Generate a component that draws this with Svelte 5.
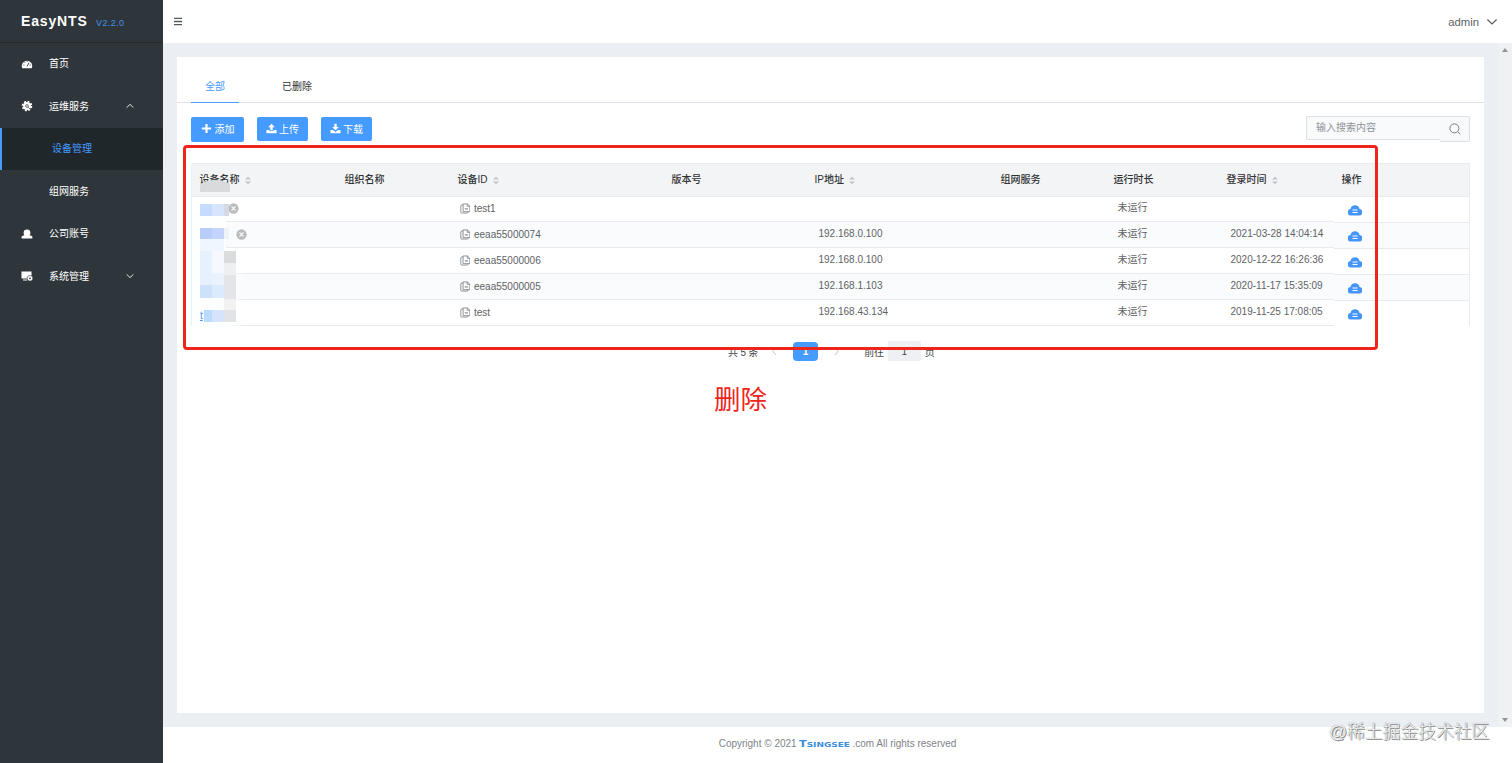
<script>
	let keyword = "";
	let page = "1";

	const columns = [
		{ label: "设备名称", sortable: true },
		{ label: "组织名称" },
		{ label: "设备ID", sortable: true },
		{ label: "版本号" },
		{ label: "IP地址", sortable: true },
		{ label: "组网服务" },
		{ label: "运行时长" },
		{ label: "登录时间", sortable: true },
		{ label: "操作" },
	];

	const devices = [
		{ id: "test1", ip: "", status: "未运行", time: "" },
		{ id: "eeaa55000074", ip: "192.168.0.100", status: "未运行", time: "2021-03-28 14:04:14" },
		{ id: "eeaa55000006", ip: "192.168.0.100", status: "未运行", time: "2020-12-22 16:26:36" },
		{ id: "eeaa55000005", ip: "192.168.1.103", status: "未运行", time: "2020-11-17 15:35:09" },
		{ id: "test", ip: "192.168.43.134", status: "未运行", time: "2019-11-25 17:08:05" },
	];

	// tiles that cover the device names: x, y, width, height, colour
	const tiles = [
		[0, 26, 12, 12, "#c5dcff"],
		[12, 26, 12, 12, "#d6e5fc"],
		[24, 26, 5, 12, "#d5d9e1"],
		[0, 50, 12, 11, "#b9cdfb"],
		[12, 50, 12, 11, "#c5d4fc"],
		[24, 50, 5, 11, "#edf3f6"],
		[0, 61, 24, 13, "#f0f6ff"],
		[0, 73, 12, 34, "#e7f0fd"],
		[12, 73, 12, 22, "#f5f9ff"],
		[12, 95, 12, 12, "#eaf2fe"],
		[24, 73, 12, 12, "#dbdcdd"],
		[24, 85, 12, 12, "#eeeff0"],
		[24, 97, 12, 24, "#e3e5e9"],
		[0, 107, 12, 13, "#cde1fb"],
		[12, 107, 12, 13, "#dbeafd"],
		[24, 121, 12, 12, "#f2f2f3"],
		[4, 132, 8, 12, "#bcdcff"],
		[12, 132, 12, 12, "#d5e4f8"],
		[24, 132, 12, 12, "#e1e3e6"],
	];
</script>

<div class="app">
	<aside class="sidebar">
		<div class="brand"><b>EasyNTS</b><span>V2.2.0</span></div>
		<nav>
			<a class="item" href="#home">
				<svg class="menu-icon" viewBox="0 0 12 12"><path fill="#fff" d="M1.3 10.2A5.2 5.2 0 1 1 10.7 10.2Z" /><path stroke="#2f353b" stroke-width=".9" fill="none" d="M6 8.4 8 4.8M2.4 7h1M3.7 4.4l.5.6M8.8 7h1M6 3.1v.8" /></svg>
				<span>首页</span>
			</a>
			<a class="item" href="#ops">
				<svg class="menu-icon" viewBox="0 0 12 12"><circle cx="6" cy="6" r="4" fill="#fff" /><circle cx="6" cy="6" r="4.4" fill="none" stroke="#fff" stroke-width="1.8" stroke-dasharray="1.9 1.55" /><circle cx="6" cy="6" r="1.4" fill="none" stroke="#2f353b" stroke-width=".7" /><path d="m7.4 7.4 2 2" stroke="#2f353b" stroke-width=".8" /></svg>
				<span>运维服务</span>
				<svg class="caret" viewBox="0 0 8 8"><path d="M.7 5.6 4 2.4 7.3 5.6" /></svg>
			</a>
			<a class="item sub active" href="#devices"><span>设备管理</span></a>
			<a class="item sub" href="#network"><span>组网服务</span></a>
			<a class="item" href="#account">
				<svg class="menu-icon" viewBox="0 0 12 12"><path fill="#fff" d="M2.600 5a3.400 3.400 0 0 1 6.800 0c0 1-.3 1.700-.8 2.200 1.600.3 2.900.9 2.900 2.200 0 .7-.3 1-1 1h-9c-.7 0-1-.3-1-1C.5 8.100 1.800 7.500 3.400 7.200 2.900 6.700 2.600 6 2.600 5Z" /></svg>
				<span>公司账号</span>
			</a>
			<a class="item" href="#system">
				<svg class="menu-icon" viewBox="0 0 12 12"><path fill="#fff" d="M.5 1.500h10V8.600H.5ZM2 9.500h4v1H2Z" /><circle cx="9" cy="8.300" r="2.800" fill="#fff" stroke="#2f353b" stroke-width=".6" /><circle cx="9" cy="8.300" r=".9" fill="#2f353b" /></svg>
				<span>系统管理</span>
				<svg class="caret" viewBox="0 0 8 8"><path d="M.7 2.400 4 5.600 7.300 2.400" /></svg>
			</a>
		</nav>
	</aside>

	<div class="body">
		<header class="topbar">
			<svg class="burger" viewBox="0 0 10 10"><path d="M.5 1.500h9M.5 5h9M.5 8.500h9" /></svg>
			<div class="user">admin <svg viewBox="0 0 12 12"><path d="M1.400 3.500 6 8l4.600-4.500" /></svg></div>
		</header>

		<div class="scroller">
			<main class="panel">
				<div class="tabs">
					<button class="tab selected">全部</button>
					<button class="tab">已删除</button>
				</div>

				<div class="toolbar">
					<button class="btn add"><svg viewBox="0 0 12 12"><path d="M4.800 1h2.400v3.800H11v2.400H7.200V11H4.800V7.200H1V4.800h3.800Z" /></svg>添加</button>
					<button class="btn"><svg viewBox="0 0 12 12"><path d="M6 .7 9.600 4.500H7.300V8H4.700V4.500H2.400ZM.5 7.600h3.300v1.200h4.400V7.600h3.300v3.500H.5Z" /></svg>上传</button>
					<button class="btn"><svg viewBox="0 0 12 12"><path d="M4.700.7h2.600v3.600h2.300L6 8.100 2.400 4.300h2.300ZM.5 7.600h2.700L6 9.800l2.800-2.200h2.700v3.500H.5Z" /></svg>下载</button>
					<div class="search">
						<input bind:value={keyword} placeholder="输入搜索内容" />
						<button aria-label="搜索"><svg viewBox="0 0 12 12"><circle cx="5.400" cy="5.400" r="4.500" /><path d="m8.700 8.700 2.500 2.600" /></svg></button>
					</div>
				</div>

				<div class="table-wrap">
					<div class="table">
						<div class="row head">
							{#each columns as column}
								<div class="cell">
									{column.label}
									{#if column.sortable}
										<svg class="sort" viewBox="0 0 8 10"><path d="M4 .7 7.400 4H.6ZM4 9.300.6 6h6.800Z" /></svg>
									{/if}
								</div>
							{/each}
							<div class="cell"></div>
						</div>
						{#each devices as device, i}
							<div class="row" class:striped={i % 2 === 1}>
								<div class="cell">
									{#if i < 2}
										<svg class="off" class:far={i === 1} viewBox="0 0 12 12"><circle cx="6" cy="6" r="5.600" fill="#b9bbbd" /><path d="m3.800 3.800 4.400 4.400m0-4.400L3.800 8.200" stroke="#fff" stroke-width="1.200" /></svg>
									{/if}
								</div>
								<div class="cell"></div>
								<div class="cell device">
									<svg viewBox="0 0 12 12"><path d="M3.500.8h5l2.700 2.600v6.200H3.500ZM3.500 2H1.800Q.9 2 .9 3v7.300q0 .9.900.9h6.400q1 0 1-.9v-.9M8.300.8v2.700h2.900" /><path d="M5.500 5.400h3.500v2H5.500Z" fill="#aaadb1" stroke="none" /></svg>
									{device.id}
								</div>
								<div class="cell"></div>
								<div class="cell value">{device.ip}</div>
								<div class="cell"></div>
								<div class="cell value status">{device.status}</div>
								<div class="cell value">{device.time}</div>
								<div class="cell fixed">
									<svg viewBox="0 0 14 12"><path fill="#4595fb" d="M3.300 11.500A3.200 3.200 0 0 1 2.500 5 4.600 4.600 0 0 1 11.500 5 3.200 3.200 0 0 1 10.700 11.500Z" /><path stroke="#fff" stroke-width="1.100" d="M4.500 6h5M4.500 8.500h5" /></svg>
								</div>
								<div class="cell fixed"></div>
							</div>
						{/each}
					</div>
					<div class="mosaic">
						<i class="blob"></i>
						{#each tiles as [x, y, w, h, color]}
							<i style="left:{x}px;top:{y}px;width:{w}px;height:{h}px;background:{color}"></i>
						{/each}
						<span class="remnant">t</span>
					</div>
				</div>

				<div class="pager">
					<span>共 5 条</span>
					<svg class="prev" viewBox="0 0 8 10"><path d="M6 1 2 5l4 4" /></svg>
					<b>1</b>
					<svg class="next" viewBox="0 0 8 10"><path d="m2 1 4 4-4 4" /></svg>
					<span>前往</span>
					<input bind:value={page} />
					<span>页</span>
				</div>
			</main>
			<div class="scrollbar">
				<svg viewBox="0 0 6 4"><path d="M3 0 6 4H0Z" /></svg>
				<svg viewBox="0 0 6 4"><path d="M0 0h6L3 4Z" /></svg>
			</div>
		</div>

		<footer>Copyright © 2021 <strong><span><big>T</big>SINGSEE</span></strong>.com All rights reserved</footer>
	</div>

	<div class="frame"></div>
	<div class="note">删除</div>
	<div class="watermark">@稀土掘金技术社区</div>
</div>

<style>
	:global(body) {
		margin: 0;
		overflow: hidden;
		font-family: "Liberation Sans", "Noto Sans CJK SC", sans-serif;
		font-size: 10px;
		color: #606266;
	}
	* {
		box-sizing: border-box;
	}
	button, input {
		font: inherit;
		border: 0;
		padding: 0;
		margin: 0;
		outline: none;
	}
	svg {
		display: block;
		flex: none;
	}
	.app {
		display: flex;
		position: relative;
		width: 1512px;
		height: 763px;
		background: #fff;
	}
	.sidebar {
		width: 163px;
		background: #2f363b;
		color: #fff;
	}
	.brand {
		display: flex;
		align-items: baseline;
		height: 43px;
		padding: 13px 0 0 21px;
		line-height: 17px;
		border-bottom: 1px solid #23292d;
	}
	.brand b {
		width: 75px;
		font-size: 14px;
		letter-spacing: 0.85px;
	}
	.brand span {
		color: #4391ee;
		font-size: 9px;
		letter-spacing: 0.4px;
	}
	.item {
		display: flex;
		align-items: center;
		height: 42.5px;
		padding: 0 0 1px 21px;
		color: #fff;
		text-decoration: none;
	}
	nav {
		margin-top: -0.5px;
	}
	.menu-icon {
		width: 12px;
		height: 12px;
		margin: 1px 16px 0 0;
	}
	.item span {
		width: 77px;
		margin-top: -1px;
	}
	.sub {
		padding-left: 49px;
	}
	.active {
		padding-left: 50px;
		border-left: 2px solid #459bff;
		background: #20272b;
		color: #459bff;
	}
	.caret {
		width: 8px;
		height: 8px;
		fill: none;
		stroke: #e5e7e9;
	}
	.body {
		flex: 1;
		display: flex;
		flex-direction: column;
		min-width: 0;
	}
	.topbar {
		height: 43px;
		display: flex;
		justify-content: space-between;
		align-items: center;
		padding: 0 14px 0 10px;
	}
	.burger {
		width: 10px;
		height: 9px;
		margin-bottom: 1px;
		stroke: #55585c;
		stroke-width: 1.5;
	}
	.user {
		display: flex;
		align-items: center;
		gap: 7px;
		font-size: 11.3px;
	}
	.user svg {
		width: 12px;
		height: 12px;
		fill: none;
		stroke: #55585c;
		stroke-width: 1.1;
	}
	.scroller {
		display: flex;
		height: 684px;
		padding: 14px 0 14px 14px;
		background: #ebeef3;
	}
	.panel {
		width: 1307px;
		background: #fff;
	}
	.scrollbar {
		width: 14px;
		margin: -14px 0 -14px 14px;
		padding: 5px 4px;
		display: flex;
		flex-direction: column;
		justify-content: space-between;
		background: #f0f1f2;
	}
	.scrollbar svg {
		width: 6px;
		height: 4px;
		fill: #929496;
	}
	.tabs {
		display: flex;
		height: 46px;
		padding: 13px 14px 0;
		border-bottom: 1px solid #dfe3e9;
	}
	.tab {
		height: 33px;
		width: 48px;
		margin-right: 27px;
		padding-bottom: 2px;
		color: #303133;
		background: none;
		white-space: nowrap;
	}
	.tab + .tab {
		width: 62px;
	}
	.selected {
		padding-bottom: 1px;
		color: #459bff;
		border-bottom: 1px solid #459bff;
	}
	.toolbar {
		display: flex;
		align-items: center;
		gap: 13px;
		height: 52px;
		padding: 0 14px;
	}
	.btn {
		display: flex;
		align-items: center;
		justify-content: center;
		gap: 2px;
		width: 51px;
		height: 24px;
		border-radius: 2px;
		background: #459bff;
		color: #fff;
		padding-bottom: 1px;
	}
	.btn svg {
		width: 11px;
		height: 11px;
		fill: #fff;
	}
	.add {
		width: 53px;
		height: 25px;
		gap: 3px;
	}
	.search {
		display: flex;
		width: 164px;
		height: 26px;
		margin-left: auto;
	}
	.search input {
		width: 134px;
		height: 24px;
		padding: 0 0 1px 9px;
		background: #f8fafb;
		border: 1px solid #dde1e6;
		border-right: 0;
		border-radius: 2px 0 0 2px;
	}
	.search input::placeholder {
		color: #8e9196;
	}
	.search button {
		display: flex;
		align-items: center;
		width: 30px;
		padding-left: 9px;
		background: #f7f9fa;
		border: 1px solid #dde1e6;
		border-left: 0;
		border-radius: 0 2px 2px 0;
	}
	.search svg {
		width: 12px;
		height: 12px;
		fill: none;
		stroke: #787c82;
	}
	.table-wrap {
		position: relative;
		margin: 8px 14px 0;
	}
	.table {
		border-left: 1px solid #eef0f4;
		border-right: 1px solid #e9ebef;
	}
	.row {
		display: grid;
		grid-template-columns: 145px 113px 214px 143px 186px 113px 113px 115px 42px 1fr;
		grid-template-rows: 26px;
		height: 26px;
	}
	.cell {
		display: flex;
		align-items: center;
		padding-left: 8px;
		margin-left: -0.5px;
		border-bottom: 1px solid #e7eaef;
		white-space: nowrap;
	}
	.row.head {
		grid-template-rows: 34px;
		height: 34px;
		margin-bottom: -1px;
	}
	.head .cell {
		padding-bottom: 3px;
		background: #f3f4f6;
		border-top: 1px solid #eaecef;
		color: #303133;
		font-weight: 500;
	}
	.striped .cell {
		background: #f9fbfc;
	}
	.sort {
		width: 8px;
		height: 9px;
		margin: 3px 0 0 4px;
		fill: #bfc3c9;
	}
	.value {
		padding: 0 0 2px 12px;
	}
	.status {
		padding-bottom: 4px;
	}
	.device {
		gap: 4px;
		padding: 0 0 0 10px;
	}
	.device svg {
		width: 10.5px;
		height: 11px;
		fill: none;
		stroke: #777b80;
		stroke-width: 0.9;
	}
	/* the fixed right column sits one pixel lower than the rest */
	.fixed {
		height: 26px;
		margin-top: 1px;
		padding: 0 0 0 14px;
	}
	.row:last-child .fixed {
		border-bottom-color: transparent;
	}
	.fixed svg {
		width: 14px;
		height: 12px;
	}
	.off {
		width: 11px;
		height: 11px;
		margin-left: 28px;
	}
	.off.far {
		margin-left: 36px;
	}
	.mosaic {
		position: absolute;
		left: 9px;
		top: 15px;
		width: 51px;
		height: 152px;
	}
	.mosaic i {
		position: absolute;
	}
	.mosaic::before {
		content: "";
		position: absolute;
		left: -8px;
		top: 35px;
		width: 54px;
		height: 117px;
		background: linear-gradient(90deg, #fdfefe 65%, transparent);
		clip-path: polygon(0 0, 34px 0, 34px 38px, 100% 38px, 100% 100%, 0 100%);
	}
	.mosaic .blob {
		left: 0;
		top: 2px;
		width: 30px;
		height: 12px;
		border-radius: 15px 15px 0 0 / 6px 6px 0 0;
		background: #d9dadb;
	}
	.remnant {
		position: absolute;
		left: 0;
		top: 132px;
		width: 4px;
		overflow: hidden;
		color: #459bff;
		text-decoration: underline;
	}
	.pager {
		display: flex;
		align-items: center;
		height: 20px;
		margin: 15px 0 0 551px;
		color: #45484c;
	}
	.pager span {
		white-space: nowrap;
		letter-spacing: -0.2px;
	}
	.pager svg {
		width: 7px;
		height: 9px;
		fill: none;
		stroke: #b5b8bd;
	}
	.pager .prev {
		margin: 0 15px 0 13px;
	}
	.pager b {
		width: 25px;
		height: 19px;
		line-height: 20px;
		text-align: center;
		border-radius: 4px;
		background: #459bff;
		color: #fff;
	}
	.pager .next {
		margin: 0 24px 0 15px;
	}
	.pager input {
		width: 33px;
		height: 20px;
		margin: 0 4px;
		background: #eff0f3;
		text-align: center;
		color: #45484c;
	}
	footer {
		flex: 1;
		padding-top: 11px;
		line-height: 12px;
		text-align: center;
		color: #808388;
	}
	footer strong {
		display: inline-block;
		width: 53px;
		font-family: "DejaVu Sans", sans-serif;
		font-size: 8px;
		color: #3a8ddf;
		text-align: left;
	}
	footer strong span {
		display: inline-block;
		transform: scale(1.12, 0.88);
		transform-origin: left 80%;
	}
	big {
		font-size: 10px;
	}
	.frame {
		position: absolute;
		left: 183px;
		top: 145px;
		width: 1195px;
		height: 205px;
		border: 3px solid #ee251b;
		border-radius: 4px;
	}
	.note {
		position: absolute;
		left: 714px;
		top: 380px;
		line-height: 40px;
		font-size: 26.5px;
		color: #ee251b;
	}
	.watermark {
		position: absolute;
		left: 1329px;
		top: 719px;
		line-height: 26px;
		font-size: 17.8px;
		font-weight: 300;
		color: #f4f4f4;
		text-shadow: 0 0 1px #777, 1px 1px 0 #8a8a8a;
		white-space: nowrap;
	}
</style>
